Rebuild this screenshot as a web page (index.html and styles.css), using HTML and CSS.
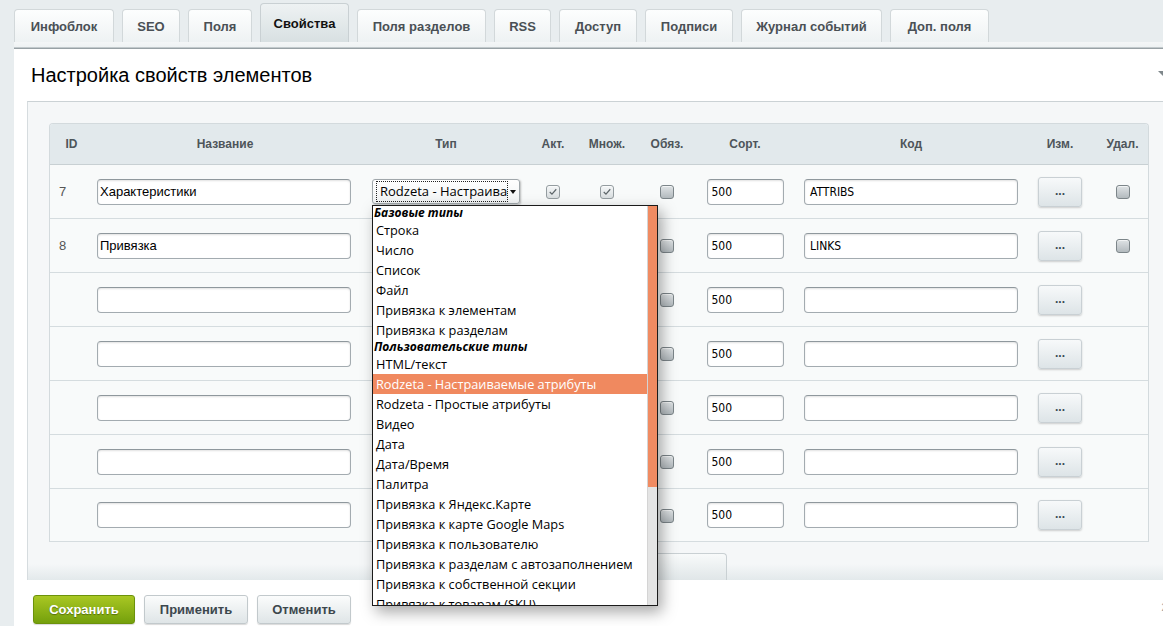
FILE: index.html
```html
<!DOCTYPE html>
<html lang="ru">
<head>
<meta charset="utf-8">
<title>Настройка свойств элементов</title>
<link rel="stylesheet" href="styles.css">
</head>
<body>
<div class="tabs">
  <div class="tab w1">Инфоблок</div>
  <div class="tab w2">SEO</div>
  <div class="tab w3">Поля</div>
  <div class="tab w4 active">Свойства</div>
  <div class="tab w5">Поля разделов</div>
  <div class="tab w6">RSS</div>
  <div class="tab w7">Доступ</div>
  <div class="tab w8">Подписи</div>
  <div class="tab w9">Журнал событий</div>
  <div class="tab w10">Доп. поля</div>
</div>
<div class="card">
  <div class="card-top"></div>
  <div class="title-row">
    <h1 class="title">Настройка свойств элементов</h1>
    <span class="collapse"></span>
  </div>
  <div class="inner">
    <table class="props">
      <colgroup>
        <col class="c-id"><col class="c-name"><col class="c-type"><col class="c-act"><col class="c-mult"><col class="c-req"><col class="c-sort"><col class="c-code"><col class="c-edit"><col class="c-del">
      </colgroup>
      <thead>
        <tr><th>ID</th><th>Название</th><th>Тип</th><th>Акт.</th><th>Множ.</th><th>Обяз.</th><th>Сорт.</th><th>Код</th><th>Изм.</th><th>Удал.</th></tr>
      </thead>
      <tbody>
        <tr>
          <td class="id">7</td>
          <td><div class="inp name">Характеристики</div></td>
          <td>
            <div class="sel-wrap">
              <div class="select"><div class="val">Rodzeta - Настраиваемые атрибуты</div><div class="arr"></div></div>
              <div class="dd">
                <div class="dd-list">
                  <div class="dd-grp">Базовые типы</div>
                  <div class="dd-item">Строка</div>
                  <div class="dd-item">Число</div>
                  <div class="dd-item">Список</div>
                  <div class="dd-item">Файл</div>
                  <div class="dd-item">Привязка к элементам</div>
                  <div class="dd-item">Привязка к разделам</div>
                  <div class="dd-grp">Пользовательские типы</div>
                  <div class="dd-item">HTML/текст</div>
                  <div class="dd-item sel">Rodzeta - Настраиваемые атрибуты</div>
                  <div class="dd-item">Rodzeta - Простые атрибуты</div>
                  <div class="dd-item">Видео</div>
                  <div class="dd-item">Дата</div>
                  <div class="dd-item">Дата/Время</div>
                  <div class="dd-item">Палитра</div>
                  <div class="dd-item">Привязка к Яндекс.Карте</div>
                  <div class="dd-item">Привязка к карте Google Maps</div>
                  <div class="dd-item">Привязка к пользователю</div>
                  <div class="dd-item">Привязка к разделам с автозаполнением</div>
                  <div class="dd-item">Привязка к собственной секции</div>
                  <div class="dd-item">Привязка к товарам (SKU)</div>
                </div>
                <div class="dd-bar"><div class="dd-thumb"></div></div>
              </div>
            </div>
          </td>
          <td><span class="cb on"><svg viewBox="0 0 14 14"><path d="M3.2 7 L5.8 9.6 L10.8 3.8"/></svg></span></td>
          <td><span class="cb on"><svg viewBox="0 0 14 14"><path d="M3.2 7 L5.8 9.6 L10.8 3.8"/></svg></span></td>
          <td><span class="cb"></span></td>
          <td><div class="inp sort">500</div></td>
          <td><div class="inp code">ATTRIBS</div></td>
          <td><div class="dots">...</div></td>
          <td><span class="cb"></span></td>
        </tr>
        <tr>
          <td class="id">8</td>
          <td><div class="inp name">Привязка</div></td>
          <td><div class="select"><div class="val"></div><div class="arr"></div></div></td>
          <td><span class="cb"></span></td>
          <td><span class="cb"></span></td>
          <td><span class="cb"></span></td>
          <td><div class="inp sort">500</div></td>
          <td><div class="inp code">LINKS</div></td>
          <td><div class="dots">...</div></td>
          <td><span class="cb"></span></td>
        </tr>
        <tr>
          <td class="id"></td>
          <td><div class="inp name"></div></td>
          <td><div class="select"><div class="val"></div><div class="arr"></div></div></td>
          <td><span class="cb"></span></td>
          <td><span class="cb"></span></td>
          <td><span class="cb"></span></td>
          <td><div class="inp sort">500</div></td>
          <td><div class="inp code"></div></td>
          <td><div class="dots">...</div></td>
          <td></td>
        </tr>
        <tr>
          <td class="id"></td>
          <td><div class="inp name"></div></td>
          <td><div class="select"><div class="val"></div><div class="arr"></div></div></td>
          <td><span class="cb"></span></td>
          <td><span class="cb"></span></td>
          <td><span class="cb"></span></td>
          <td><div class="inp sort">500</div></td>
          <td><div class="inp code"></div></td>
          <td><div class="dots">...</div></td>
          <td></td>
        </tr>
        <tr>
          <td class="id"></td>
          <td><div class="inp name"></div></td>
          <td><div class="select"><div class="val"></div><div class="arr"></div></div></td>
          <td><span class="cb"></span></td>
          <td><span class="cb"></span></td>
          <td><span class="cb"></span></td>
          <td><div class="inp sort">500</div></td>
          <td><div class="inp code"></div></td>
          <td><div class="dots">...</div></td>
          <td></td>
        </tr>
        <tr>
          <td class="id"></td>
          <td><div class="inp name"></div></td>
          <td><div class="select"><div class="val"></div><div class="arr"></div></div></td>
          <td><span class="cb"></span></td>
          <td><span class="cb"></span></td>
          <td><span class="cb"></span></td>
          <td><div class="inp sort">500</div></td>
          <td><div class="inp code"></div></td>
          <td><div class="dots">...</div></td>
          <td></td>
        </tr>
        <tr>
          <td class="id"></td>
          <td><div class="inp name"></div></td>
          <td><div class="select"><div class="val"></div><div class="arr"></div></div></td>
          <td><span class="cb"></span></td>
          <td><span class="cb"></span></td>
          <td><span class="cb"></span></td>
          <td><div class="inp sort">500</div></td>
          <td><div class="inp code"></div></td>
          <td><div class="dots">...</div></td>
          <td></td>
        </tr>
      </tbody>
    </table>
    <div class="more-row"><div class="more"></div></div>
  </div>
  <div class="footer">
    <div class="btn save">Сохранить</div>
    <div class="btn apply">Применить</div>
    <div class="btn cancel">Отменить</div>
    <span class="pg">2</span>
  </div>
</div>
</body>
</html>
```
FILE: styles.css
```css
* { box-sizing: border-box; }
html, body { margin: 0; padding: 0; overflow: hidden; }
body {
  width: 1163px;
  height: 626px;
  background: #e8edef;
  font-family: "Liberation Sans", Arial, sans-serif;
  color: #000;
}

/* tabs */
.tabs {
  display: flex;
  align-items: flex-end;
  gap: 8px;
  height: 42px;
  padding-left: 14px;
}
.tab {
  height: 33px;
  border: 1px solid #d2d8da;
  border-bottom: none;
  border-radius: 4px 4px 0 0;
  background: linear-gradient(#fdfefe, #eef2f3);
  font-weight: bold;
  font-size: 13px;
  color: #4a5055;
  display: flex;
  align-items: center;
  justify-content: center;
  white-space: nowrap;
}
.tab.active {
  height: 39px;
  background: linear-gradient(#eef2f3, #d8e0e2);
  border-color: #c9d0d3;
  color: #111;
}
.w1 { width: 100px; }
.w2 { width: 58px; }
.w3 { width: 64px; }
.w4 { width: 89px; }
.w5 { width: 129px; }
.w6 { width: 57px; }
.w7 { width: 78px; }
.w8 { width: 88px; }
.w9 { width: 141px; }
.w10 { width: 99px; }

/* card */
.card {
  margin-left: 14px;
  height: 584px;
  background: #fff;
  display: flex;
  flex-direction: column;
}
.card-top {
  height: 7px;
  flex: none;
  background: linear-gradient(#f4f6f7 0, #eef2f3 5px, #c2c9cc 5px, #c2c9cc 6px, #98a1a5 6px, #98a1a5 7px);
}
.title-row {
  height: 52px;
  flex: none;
  display: flex;
  align-items: center;
  padding-left: 17px;
}
.title {
  margin: 0;
  font-weight: normal;
  font-size: 20px;
  color: #000;
}
.collapse {
  margin-left: auto;
  margin-right: -5px;
  margin-top: -3px;
  width: 0;
  height: 0;
  border-left: 5px solid transparent;
  border-right: 5px solid transparent;
  border-top: 5px solid #7f878b;
}

.inner {
  height: 479px;
  flex: none;
  margin-left: 13px;
  border-left: 1px solid #d6dcdf;
  border-top: 1px solid #cbd2d5;
  background: linear-gradient(#f5f7f8 0, #f5f7f8 calc(100% - 16px), #e3e9eb 100%);
  padding: 21px 0 0 21px;
}

/* table */
.props {
  width: 1100px;
  table-layout: fixed;
  border-collapse: separate;
  border-spacing: 0;
  border: 1px solid #d3dadd;
  border-bottom: none;
  border-radius: 4px 4px 0 0;
  background: #f8fafa;
}
.c-id { width: 43px; }
.c-name { width: 264px; }
.c-type { width: 178px; }
.c-act { width: 36px; }
.c-mult { width: 72px; }
.c-req { width: 48px; }
.c-sort { width: 108px; }
.c-code { width: 224px; }
.c-edit { width: 74px; }
.c-del { width: 51px; }

.props th {
  height: 41px;
  padding: 0;
  background: #e2e9ec;
  border-bottom: 1px solid #c8d0d3;
  font-size: 12px;
  font-weight: bold;
  color: #4e555a;
  text-align: center;
}
.props th:first-child { border-top-left-radius: 3px; }
.props th:last-child { border-top-right-radius: 3px; }
.props td {
  height: 54px;
  padding: 0;
  border-bottom: 1px solid #d5dcdf;
  text-align: center;
  vertical-align: middle;
}
.props tbody tr:last-child td { height: 53px; }
.props td.id {
  text-align: left;
  padding-left: 9px;
  font-size: 13px;
  color: #555;
}

.inp {
  height: 26px;
  border: 1px solid #a3abb0;
  border-top-color: #8f989d;
  border-radius: 4px;
  background: #fff;
  box-shadow: inset 0 1px 2px rgba(0, 0, 0, 0.12);
  font-size: 13px;
  line-height: 24px;
  padding: 0 5px;
  text-align: left;
  white-space: nowrap;
  overflow: hidden;
}
.inp.name { width: 254px; margin-left: 4px; padding-left: 2px; }
.inp.sort { width: 77px; margin: 0 auto; padding-left: 4px; font-family: "DejaVu Sans Condensed", "Liberation Sans", sans-serif; font-size: 12px; }
.inp.code { width: 214px; margin: 0 auto; padding-left: 5px; font-family: "DejaVu Sans Condensed", "Liberation Sans", sans-serif; font-size: 12px; }

.sel-wrap { position: relative; width: 148px; margin: 0 auto; }
.select {
  width: 148px;
  height: 25px;
  margin: 0 auto;
  border: 1px solid #a0a7ab;
  border-radius: 3px;
  background: linear-gradient(#ffffff, #f1f3f4);
  box-shadow: 1px 1px 2px rgba(0, 0, 0, 0.25);
  display: flex;
  align-items: center;
  padding: 1px 2px 1px 3px;
  text-align: left;
}
.select .val {
  flex: 1;
  height: 21px;
  outline: 1px dotted #222;
  outline-offset: -1px;
  overflow: hidden;
  white-space: nowrap;
  font-family: "Open Sans", "DejaVu Sans", sans-serif;
  font-size: 13px;
  line-height: 21px;
  padding-left: 4px;
  color: #000;
}
.select .arr {
  width: 9px;
  height: 100%;
  display: flex;
  align-items: center;
  justify-content: center;
}
.select .arr::before {
  content: "";
  border-left: 3px solid transparent;
  border-right: 3px solid transparent;
  border-top: 4px solid #111;
}

/* dropdown list */
.dd {
  position: absolute;
  left: 0;
  top: 26px;
  z-index: 10;
  width: 286px;
  height: 401px;
  border: 1px solid #1b1b1b;
  background: #fff;
  display: flex;
  box-shadow: 4px 6px 14px rgba(0, 0, 0, 0.35);
  text-align: left;
  font-family: "Open Sans", "DejaVu Sans", sans-serif;
  color: #000;
}
.dd-list { flex: 1; overflow: hidden; }
.dd-grp {
  height: 14px;
  line-height: 14px;
  font-weight: bold;
  font-style: italic;
  font-size: 12px;
  padding-left: 1px;
  white-space: nowrap;
}
.dd-item {
  height: 20px;
  line-height: 20px;
  font-size: 12.75px;
  padding-left: 3px;
  white-space: nowrap;
}
.dd-item.sel { background: #f0895f; color: #fff; }
.dd-bar {
  width: 10px;
  background: #e4e4e4;
  border-left: 1px solid #d4d4d4;
}
.dd-thumb { height: 281px; background: #f08b62; }

/* checkboxes */
.cb {
  display: inline-block;
  width: 14px;
  height: 14px;
  border: 1px solid #7c8589;
  border-radius: 3px;
  background: linear-gradient(#dfe3e5, #b3babe);
  box-shadow: inset 0 1px 0 rgba(255, 255, 255, 0.6);
  vertical-align: middle;
}
.cb.on {
  border-color: #949ca0;
  background: linear-gradient(#f4f6f7, #d9dee0);
}
.cb svg { display: block; width: 12px; height: 12px; }
.cb svg path { fill: none; stroke: #5e666a; stroke-width: 1.4; }

.dots {
  width: 44px;
  height: 30px;
  margin: 0 auto;
  border: 1px solid #c9d0d4;
  border-radius: 3px;
  background: linear-gradient(#f7f9fa, #dde4e7);
  box-shadow: 0 1px 2px rgba(0, 0, 0, 0.18);
  font-size: 12px;
  font-weight: bold;
  color: #3c4b55;
  line-height: 26px;
  text-align: center;
}

.more-row { height: 38px; padding-top: 11px; }
.more {
  margin-left: 511px;
  width: 167px;
  height: 27px;
  border: 1px solid #c9d0d3;
  border-bottom: none;
  border-radius: 4px 4px 0 0;
  background: linear-gradient(#f8fafa, #e0e6e8);
}

/* footer */
.footer {
  height: 46px;
  flex: none;
  display: flex;
  align-items: flex-start;
  gap: 9px;
  padding: 15px 0 0 19px;
}
.btn {
  height: 29px;
  border: 1px solid #c2c9cc;
  border-radius: 3px;
  background: linear-gradient(#fbfcfc, #dfe5e7);
  box-shadow: 0 1px 1px rgba(0, 0, 0, 0.15);
  font-size: 13px;
  font-weight: bold;
  color: #3c474d;
  display: flex;
  align-items: center;
  justify-content: center;
}
.btn.save {
  width: 102px;
  background: linear-gradient(#a9c723, #74a00c);
  border-color: #6c920b;
  color: #fff;
  text-shadow: 0 1px 1px rgba(0, 0, 0, 0.35);
}
.btn.apply { width: 104px; }
.btn.cancel { width: 94px; }
.pg {
  margin-left: auto;
  margin-right: -4px;
  margin-top: 7px;
  font-size: 10px;
  color: #9aa0a3;
}
```
